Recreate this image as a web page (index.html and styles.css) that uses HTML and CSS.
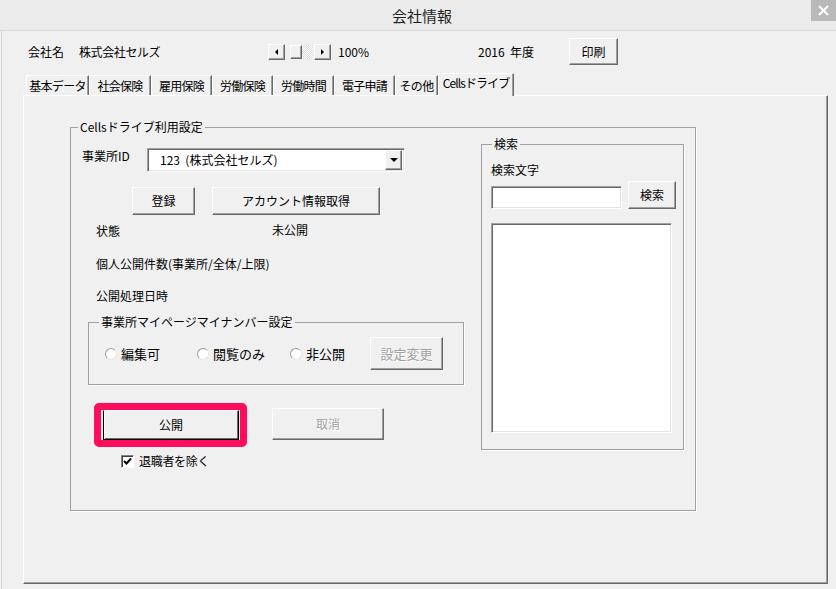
FILE: index.html
```html
<!DOCTYPE html>
<html>
<head>
    <meta charset="utf-8" />
    <title>会社情報</title>
    <link rel="stylesheet" href="styles.css">
</head>
<body>
<div class="window">
    <div class="titlebar">
        <span class="title">会社情報</span>
        <span class="close">
            <svg width="11" height="11" viewBox="0 0 11 11"><path d="M1 1 L10 10 M10 1 L1 10" stroke="#fff" stroke-width="2" fill="none"/></svg>
        </span>
    </div>
    <div class="client">
        <div class="header">
            <span class="lbl-company">会社名</span>
            <span class="company">株式会社セルズ</span>
            <div class="scroll">
                <span class="sbtn"><i class="tri-left"></i></span>
                <span class="track"><span class="thumb"></span><span class="dither"></span></span>
                <span class="sbtn"><i class="tri-right"></i></span>
            </div>
            <span class="zoom">100%</span>
            <span class="year">2016&nbsp; 年度</span>
            <button class="btn btn-print">印刷</button>
        </div>

        <ul class="tabs">
            <li class="tab w63">基本データ</li>
            <li class="tab w62">社会保険</li>
            <li class="tab w61">雇用保険</li>
            <li class="tab w61">労働保険</li>
            <li class="tab w61">労働時間</li>
            <li class="tab w61">電子申請</li>
            <li class="tab w43">その他</li>
            <li class="tab tab-active">Cellsドライブ</li>
        </ul>

        <div class="page">
            <fieldset class="group group-drive">
                <legend>Cellsドライブ利用設定</legend>
                <div class="drive-body">
                    <div class="drive-left">
                        <div class="id-row">
                            <span class="id-label">事業所ID</span>
                            <div class="combo">
                                <span class="combo-text">123&nbsp; (株式会社セルズ)</span>
                                <span class="combo-btn"><i class="tri-down"></i></span>
                            </div>
                        </div>
                        <div class="btn-row">
                            <button class="btn btn-reg">登録</button>
                            <button class="btn btn-acct">アカウント情報取得</button>
                        </div>
                        <div class="info info-state">
                            <span class="info-label">状態</span>
                            <span class="info-value">未公開</span>
                        </div>
                        <div class="info info-count">個人公開件数(事業所/全体/上限)</div>
                        <div class="info info-date">公開処理日時</div>

                        <fieldset class="group group-mynum">
                            <legend>事業所マイページマイナンバー設定</legend>
                            <div class="radio-row">
                                <label class="radio r1"><span class="radio-dot"></span>編集可</label>
                                <label class="radio r2"><span class="radio-dot"></span>閲覧のみ</label>
                                <label class="radio r3"><span class="radio-dot"></span>非公開</label>
                                <button class="btn btn-change" disabled>設定変更</button>
                            </div>
                        </fieldset>

                        <div class="action-row">
                            <div class="highlight">
                                <button class="btn btn-default">公開</button>
                            </div>
                            <button class="btn btn-cancel" disabled>取消</button>
                        </div>
                        <label class="check">
                            <span class="check-box">
                                <svg width="11" height="11" viewBox="0 0 11 11"><path d="M2 5 L4.5 7.5 L9 2.5" stroke="#000" stroke-width="2" fill="none"/></svg>
                            </span>退職者を除く
                        </label>
                    </div>

                    <fieldset class="group group-search">
                        <legend>検索</legend>
                        <div class="search-label">検索文字</div>
                        <div class="search-row">
                            <span class="textbox"></span>
                            <button class="btn btn-search">検索</button>
                        </div>
                        <div class="listbox"></div>
                    </fieldset>
                </div>
            </fieldset>
        </div>
    </div>
</div>
</body>
</html>
```

FILE: styles.css
```css
* {
    box-sizing: border-box;
}

body {
    margin: 0;
    padding: 0;
    background: #f0f0f0;
    color: #000;
    font: 12px/16px "Noto Sans CJK JP", sans-serif;
}

ul, li {
    margin: 0;
    padding: 0;
    list-style: none;
}

.window {
    width: 836px;
    height: 589px;
    overflow: hidden;
}

/* title bar */
.titlebar {
    position: relative;
    height: 31px;
    background: #ebebeb;
    border-bottom: 1px solid #d6d6d6;
    text-align: center;
}

    .titlebar .title {
        display: block;
        padding-left: 8px;
        font-size: 15px;
        line-height: 32px;
        color: #1e1e1e;
    }

    .titlebar .close {
        position: absolute;
        top: 0;
        right: 0;
        width: 25px;
        height: 21px;
        background: #b9b9b9;
        display: flex;
        align-items: center;
        justify-content: center;
    }

.client {
    height: 558px;
    margin-left: 1px;
    border-left: 1px solid #dadada;
    padding-top: 7px;
}

/* header */
.header {
    display: flex;
    align-items: center;
    height: 27px;
    padding-left: 26px;
}

    .header .lbl-company {
        width: 51px;
    }

    .header .company {
        width: 189px;
        letter-spacing: -0.4px;
    }

    .header .zoom {
        margin-left: 7px;
        width: 140px;
    }

    .header .year {
        width: 91px;
    }

.scroll {
    display: flex;
    align-items: center;
    width: 63px;
}

    .scroll .sbtn {
        width: 17px;
        height: 16px;
        background: #f0f0f0;
        border: 1px solid;
        border-color: #fff #696969 #696969 #fff;
        box-shadow: inset -1px -1px 0 #a0a0a0;
        display: flex;
        align-items: center;
        justify-content: center;
    }

    .scroll .track {
        display: flex;
        align-items: center;
        width: 29px;
        height: 16px;
    }

    .scroll .thumb {
        margin-left: 5px;
        width: 12px;
        height: 14px;
        border: 1px solid;
        border-color: #fff #696969 #696969 #fff;
        box-shadow: inset -1px -1px 0 #a0a0a0;
    }

    .scroll .dither {
        width: 11px;
        height: 14px;
        background: repeating-conic-gradient(#fff 0 25%, #dcdcdc 0 50%) 0 0 / 2px 2px;
    }

.tri-left, .tri-right, .tri-down {
    display: block;
    width: 0;
    height: 0;
}

.tri-left {
    border-top: 3px solid transparent;
    border-bottom: 3px solid transparent;
    border-right: 3px solid #000;
}

.tri-right {
    border-top: 3px solid transparent;
    border-bottom: 3px solid transparent;
    border-left: 3px solid #000;
}

.tri-down {
    border-left: 4px solid transparent;
    border-right: 4px solid transparent;
    border-top: 4px solid #000;
}

/* buttons */
.btn {
    margin: 0;
    padding: 0;
    background: #f0f0f0;
    border: 1px solid;
    border-color: #fff #696969 #696969 #fff;
    box-shadow: inset -1px -1px 0 #a0a0a0;
    font: 12px/16px "Noto Sans CJK JP", sans-serif;
    color: #000;
    text-align: center;
}

    .btn:disabled {
        color: #a0a0a0;
        text-shadow: 1px 1px 0 #fff;
    }

.btn-print {
    width: 49px;
    height: 27px;
}

/* tabs */
.tabs {
    display: flex;
    align-items: flex-end;
    height: 22px;
    margin-top: 8px;
    margin-left: 24px;
}

    .tabs .tab {
        height: 20px;
        border-top: 1px solid #fff;
        border-left: 1px solid #fff;
        border-right: 1px solid #696969;
        box-shadow: inset -1px 0 0 #a0a0a0;
        text-align: center;
        line-height: 19px;
        letter-spacing: -0.7px;
        white-space: nowrap;
    }

    .tabs .w63 { width: 63px; }
    .tabs .w62 { width: 62px; }
    .tabs .w61 { width: 61px; }
    .tabs .w43 { width: 43px; }

    .tabs .tab-active {
        position: relative;
        z-index: 1;
        width: 76px;
        height: 23px;
        margin-bottom: -1px;
        background: #f0f0f0;
        line-height: 18px;
        letter-spacing: -0.9px;
    }

/* page panel */
.page {
    width: 805px;
    height: 489px;
    margin-left: 21px;
    padding: 24px 0 0 46px;
    border: 1px solid;
    border-color: #fff #696969 #696969 #fff;
    box-shadow: inset -1px -1px 0 #a0a0a0;
}

.group {
    margin: 0;
    padding: 0;
    min-width: 0;
    border: 1px solid #a0a0a0;
    box-shadow: 1px 1px 0 #fff;
}

    .group legend {
        padding: 0 2px;
        margin-left: 10px;
        line-height: 14px;
        background: #f0f0f0;
    }

.group-drive {
    width: 626px;
    height: 391px;
}

    .group-drive > legend {
        margin-left: 7px;
    }

.drive-body {
    display: flex;
    align-items: flex-start;
}

.drive-left {
    width: 393px;
    padding-left: 11px;
}

.id-row {
    display: flex;
    margin-top: 14px;
}

.id-label {
    width: 65px;
}

.combo {
    display: flex;
    align-items: center;
    justify-content: space-between;
    width: 258px;
    height: 24px;
    background: #fff;
    border: 1px solid;
    border-color: #a0a0a0 #fff #fff #a0a0a0;
    box-shadow: inset 1px 1px 0 #696969, inset -1px -1px 0 #e3e3e3;
    padding: 0 2px 0 12px;
}

.combo-btn {
    width: 17px;
    height: 20px;
    background: #f0f0f0;
    border: 1px solid;
    border-color: #fff #696969 #696969 #fff;
    box-shadow: inset -1px -1px 0 #a0a0a0;
    display: flex;
    align-items: center;
    justify-content: center;
}

.btn-row {
    display: flex;
    gap: 17px;
    margin-top: 15px;
    padding-left: 50px;
}

.btn-reg {
    width: 63px;
    height: 28px;
}

.btn-acct {
    width: 168px;
    height: 28px;
}

.info {
    padding-left: 14px;
}

.info-state {
    display: flex;
    margin-top: 8px;
}

    .info-state .info-label {
        width: 176px;
    }

    .info-state .info-value {
        position: relative;
        top: -1px;
    }

.info-count {
    margin-top: 17px;
}

.info-date {
    margin-top: 16px;
}

.group-mynum {
    width: 376px;
    height: 70px;
    margin: 11px 0 0 6px;
}

.radio-row {
    display: flex;
    align-items: center;
    margin-top: 8px;
    padding-left: 16px;
}

.radio {
    display: flex;
    align-items: center;
    gap: 4px;
    font-size: 13px;
}

    .radio.r1 { width: 92px; }
    .radio.r2 { width: 93px; }
    .radio.r3 { width: 80px; }

.radio-dot {
    width: 12px;
    height: 12px;
    border-radius: 50%;
    background: #fff;
    border: 1px solid;
    border-color: #9a9a9a #e6e6e6 #e6e6e6 #9a9a9a;
}

.btn-change {
    width: 73px;
    height: 33px;
    font-size: 13px;
}

.action-row {
    display: flex;
    align-items: flex-start;
    margin-top: 18px;
}

.highlight {
    width: 153px;
    height: 44px;
    margin-left: 12px;
    padding: 0 1px 0 2px;
    border: 7px solid #fc0e5c;
    border-radius: 5px;
}

.btn-default {
    width: 136px;
    height: 30px;
    border-color: #fff #000 #000 #000;
    box-shadow: inset 1px 0 0 #fff, inset -1px -1px 0 #696969;
}

.btn-cancel {
    width: 112px;
    height: 32px;
    margin: 5px 0 0 25px;
}

.check {
    display: flex;
    align-items: center;
    gap: 5px;
    margin-top: 6px;
    padding-left: 39px;
    letter-spacing: -0.3px;
}

.check-box {
    width: 13px;
    height: 13px;
    background: #fff;
    border: 1px solid;
    border-color: #808080 #fff #fff #808080;
    box-shadow: inset 1px 1px 0 #404040;
    display: flex;
    align-items: center;
    justify-content: center;
}

/* search box */
.group-search {
    width: 203px;
    height: 313px;
    margin: 3px 0 0 17px;
    padding-left: 9px;
}

    .group-search > legend {
        margin-left: 1px;
    }

.search-label {
    margin-top: 11px;
}

.search-row {
    display: flex;
    align-items: flex-end;
    gap: 6px;
    margin-top: 3px;
}

.textbox {
    width: 131px;
    height: 23px;
    background: #fff;
    border: 1px solid;
    border-color: #a0a0a0 #fff #fff #a0a0a0;
    box-shadow: inset 1px 1px 0 #696969, inset -1px -1px 0 #e3e3e3;
}

.btn-search {
    width: 48px;
    height: 28px;
}

.listbox {
    width: 181px;
    height: 210px;
    margin-top: 14px;
    background: #fff;
    border: 1px solid;
    border-color: #a0a0a0 #fff #fff #a0a0a0;
    box-shadow: inset 1px 1px 0 #696969, inset -1px -1px 0 #e3e3e3;
}
```
